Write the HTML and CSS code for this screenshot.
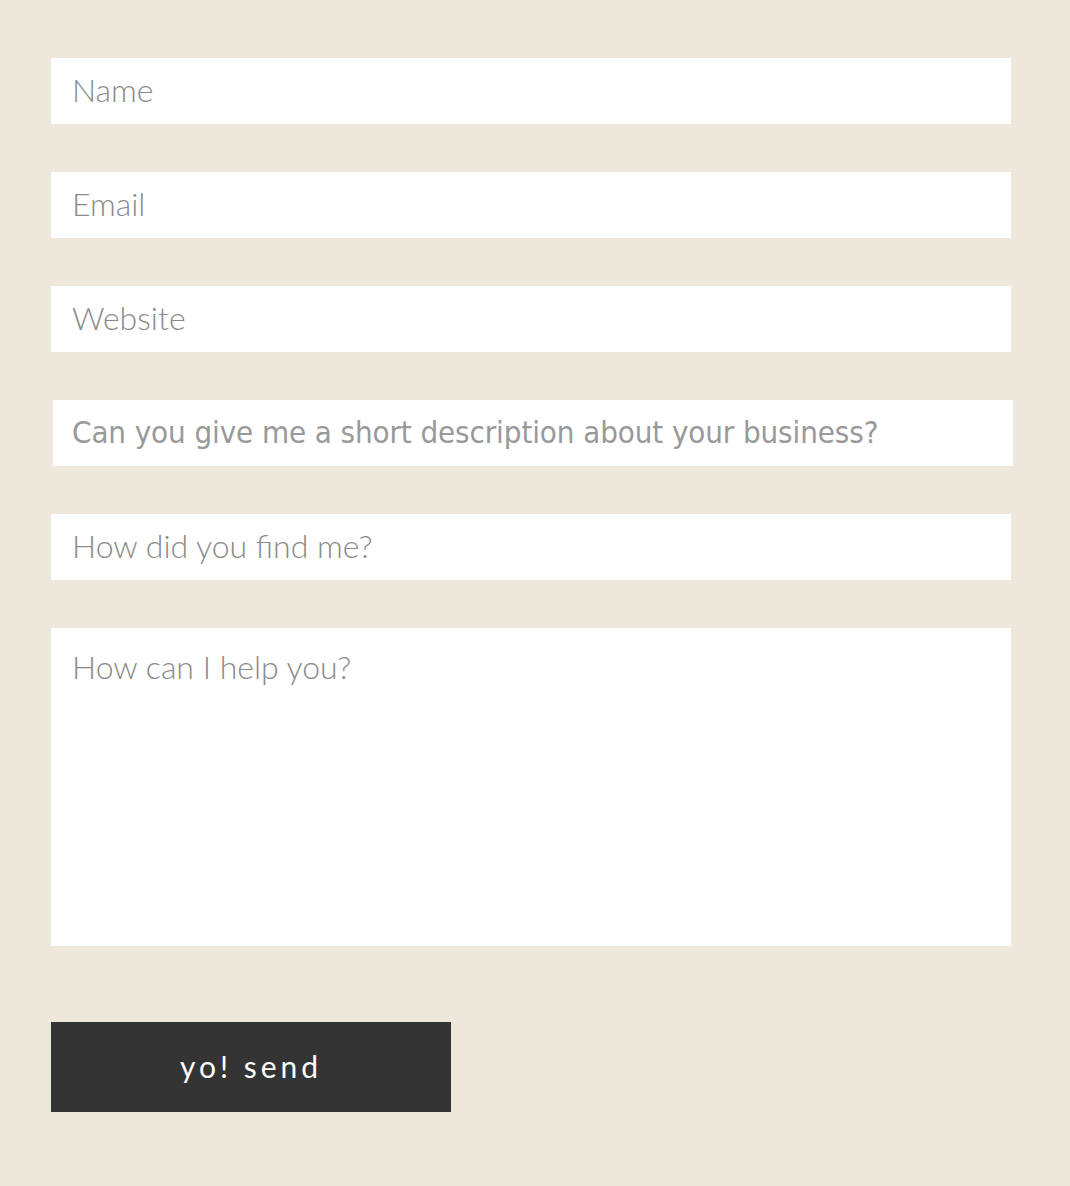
FILE: index.html
```html
<!DOCTYPE html>
<html>
<head>
<meta charset="utf-8">
<link rel="stylesheet" href="styles.css">
</head>
<body>
<form class="contact">
  <input class="field" type="text" placeholder="Name">
  <input class="field" type="text" placeholder="Email">
  <input class="field" type="text" placeholder="Website">
  <input class="field field-desc" type="text" placeholder="Can you give me a short description about your business?">
  <input class="field" type="text" placeholder="How did you find me?">
  <textarea class="field area" placeholder="How can I help you?"></textarea>
  <button class="send" type="button">yo! send</button>
</form>
</body>
</html>
```
FILE: styles.css
```css
html, body {
  margin: 0;
  padding: 0;
  background: #ede7dc;
}
body {
  width: 1070px;
  height: 1186px;
}
.contact {
  display: flex;
  flex-direction: column;
  align-items: flex-start;
  padding: 58px 0 0 51px;
}
.field {
  box-sizing: border-box;
  width: 960px;
  height: 66px;
  margin: 0 0 48px 0;
  padding: 0 20px 3px 21px;
  border: none;
  outline: none;
  background: #fff;
  font-family: Lato, "Open Sans", sans-serif;
  font-weight: 300;
  font-size: 32px;
  color: #8a8a8a;
}
.field::placeholder {
  color: #8a8a8a;
  opacity: 1;
}
.field-desc {
  margin-left: 2px;
  padding-left: 19px;
  font-family: "DejaVu Sans Condensed", "Liberation Sans Narrow", sans-serif;
  font-weight: 200;
  font-size: 31px;
  letter-spacing: -0.1px;
}
.field-desc::placeholder {
  color: #999;
}
.area {
  height: 318px;
  padding-top: 21px;
  resize: none;
  margin-bottom: 76px;
  line-height: 36px;
}
.send {
  width: 400px;
  height: 90px;
  border: none;
  background: #343434;
  color: #fff;
  font-family: Lato, "Open Sans", sans-serif;
  font-size: 30px;
  letter-spacing: 4px;
  padding: 0 0 2px 0;
  cursor: pointer;
}
```
